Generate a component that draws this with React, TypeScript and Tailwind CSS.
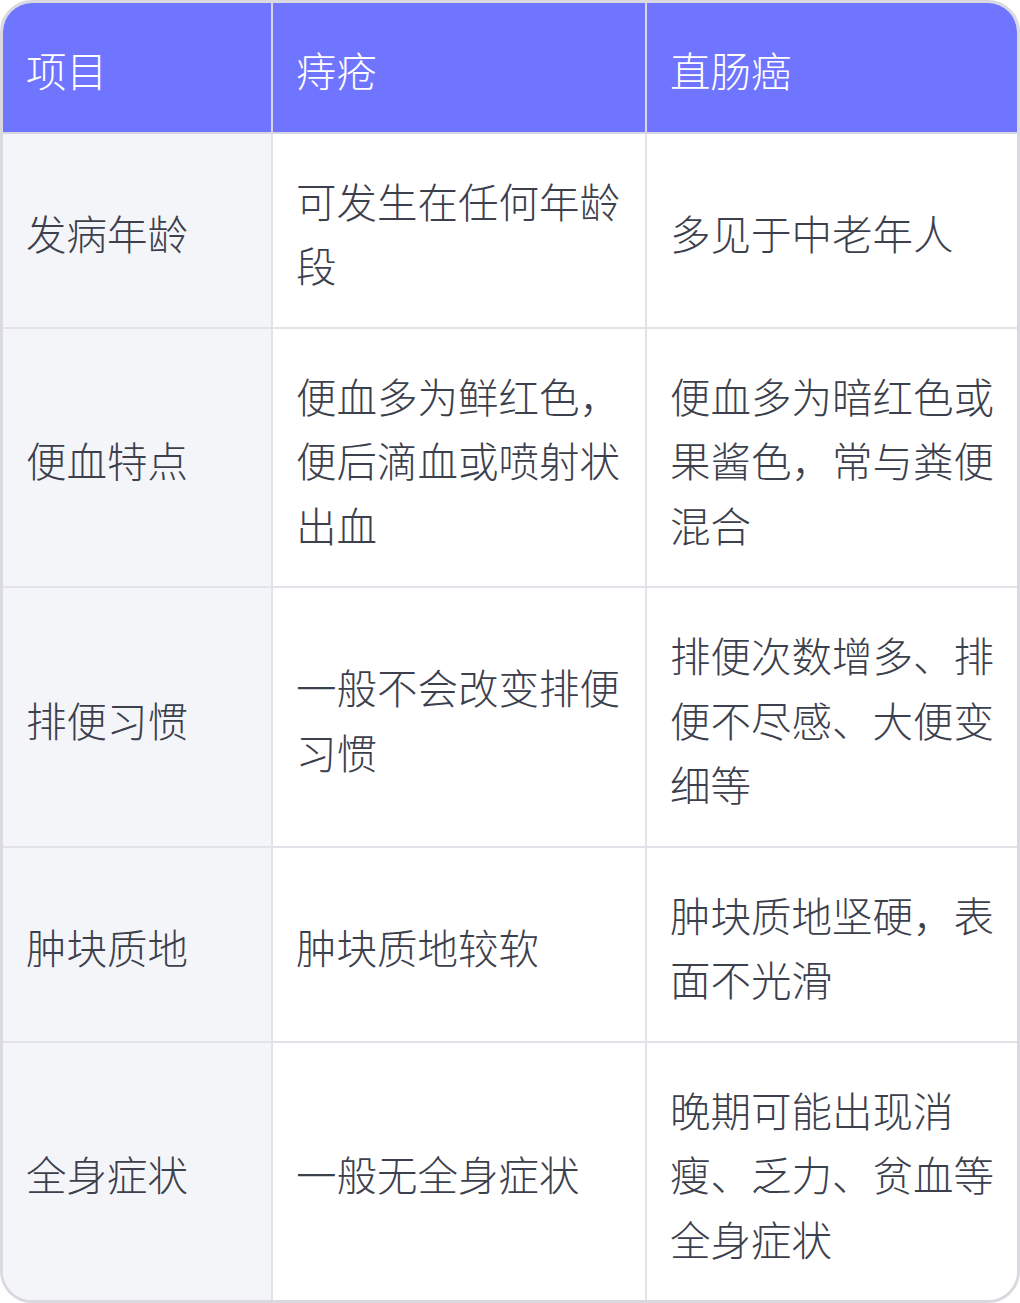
const rows: [string, string, string][] = [
  ["发病年龄", "可发生在任何年龄段", "多见于中老年人"],
  ["便血特点", "便血多为鲜红色，便后滴血或喷射状出血", "便血多为暗红色或果酱色，常与粪便混合"],
  ["排便习惯", "一般不会改变排便习惯", "排便次数增多、排便不尽感、大便变细等"],
  ["肿块质地", "肿块质地较软", "肿块质地坚硬，表面不光滑"],
  ["全身症状", "一般无全身症状", "晚期可能出现消瘦、乏力、贫血等全身症状"],
]

export default function App() {
  const font = { fontFamily: '"Noto Sans CJK SC", "Noto Sans", sans-serif' }

  return (
    <div className="w-[1020px] h-[1303px] bg-white" style={font}>
      <div className="rounded-[32px] border-[3px] border-[#d9d9df] overflow-hidden">
        <div className="grid grid-cols-[270px_374px_370px] text-[40.5px] leading-[64.5px] font-light">
          {/* header */}
          {["项目", "痔疮", "直肠癌"].map((h, i) => (
            <div
              key={h}
              className={
                "bg-[#7075ff] text-white pt-[35px] pb-[29px] pl-[23px] pr-[22px] border-b-2 border-[#d6d7e3] " +
                (i < 2 ? "border-r-2" : "")
              }
            >
              {h}
            </div>
          ))}

          {/* body */}
          {rows.map((r, ri) =>
            r.map((c, ci) => (
              <div
                key={ri + "-" + ci}
                className={
                  "flex items-center pt-[35px] pb-[29px] pl-[23px] pr-[22px] text-[#3c404c] border-[#e2e2e8] " +
                  (ci === 0 ? "bg-[#f4f5f9] " : "bg-white ") +
                  (ci < 2 ? "border-r-2 " : "") +
                  (ri < rows.length - 1 ? "border-b-2" : "")
                }
              >
                <span>{c}</span>
              </div>
            ))
          )}
        </div>
      </div>
    </div>
  )
}
